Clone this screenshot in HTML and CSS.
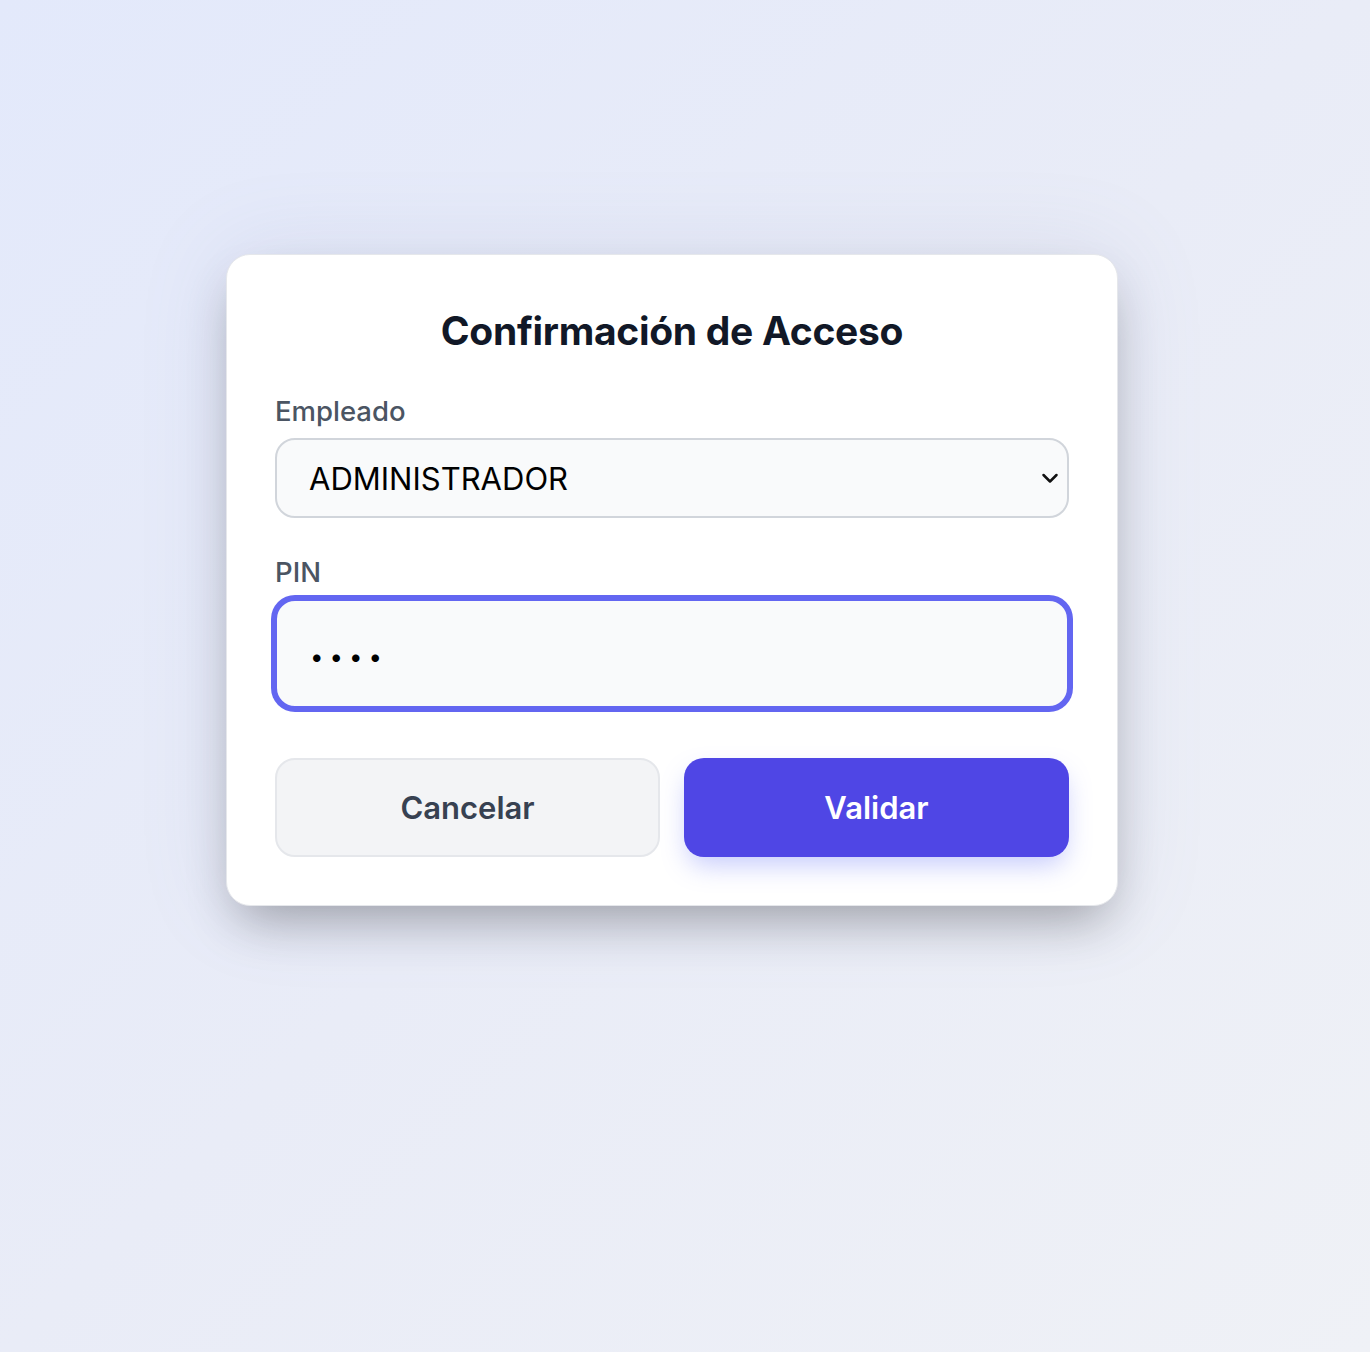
FILE: index.html
```html
<!DOCTYPE html>
<html lang="es">
<head>
<meta charset="utf-8">
<title>Confirmación de Acceso</title>
<link rel="stylesheet" href="styles.css">
</head>
<body>
<main class="page">
  <section class="card">
    <h1 class="title">Confirmación de Acceso</h1>
    <div class="field">
      <label class="label" for="empleado">Empleado</label>
      <div class="select-wrap">
        <select id="empleado" class="select">
          <option>ADMINISTRADOR</option>
        </select>
        <svg class="chevron" width="18" height="11" viewBox="0 0 18 11" aria-hidden="true">
          <path d="M2.5 2 L9 8.5 L15.5 2" fill="none" stroke="#111" stroke-width="2.5" stroke-linecap="round" stroke-linejoin="round"/>
        </svg>
      </div>
    </div>
    <div class="field">
      <label class="label" for="pin">PIN</label>
      <input id="pin" class="input" type="password" value="1234">
    </div>
    <div class="actions">
      <button class="btn btn-cancel" type="button">Cancelar</button>
      <button class="btn btn-primary" type="button">Validar</button>
    </div>
  </section>
</main>
</body>
</html>
```

FILE: styles.css
```css
* { box-sizing: border-box; }

html, body {
  margin: 0;
  padding: 0;
}

body {
  font-family: Inter, "Noto Sans", "Liberation Sans", sans-serif;
  background: linear-gradient(135deg, #e3e9fb 0%, #e9ecf7 50%, #eff1f6 100%);
  min-height: 1352px;
}

.page {
  display: flex;
  justify-content: center;
  padding-top: 254px;
  padding-right: 26px;
}

.card {
  width: 892px;
  background: #ffffff;
  border: 1px solid #e5e7eb;
  border-radius: 24px;
  padding: 48px;
  box-shadow: 0 25px 50px -12px rgba(0, 0, 0, 0.3), 0 0 90px rgba(120, 130, 170, 0.14);
}

.title {
  margin: 4px 0 38px;
  font-size: 39px;
  line-height: 48px;
  font-weight: 700;
  color: #111827;
  text-align: center;
  letter-spacing: -0.3px;
}

.field {
  display: flex;
  flex-direction: column;
}

.field + .field {
  margin-top: 36px;
}

.label {
  font-size: 27.5px;
  line-height: 36px;
  font-weight: 500;
  color: #4b5563;
  margin-bottom: 9px;
}

.select-wrap {
  position: relative;
}

.select {
  appearance: none;
  -webkit-appearance: none;
  width: 100%;
  height: 80px;
  padding: 0 60px 0 32px;
  border: 2px solid #d1d5db;
  border-radius: 20px;
  background: #f9fafb;
  font-family: Inter, "Noto Sans", "Liberation Sans", sans-serif;
  font-size: 31px;
  color: #000;
  outline: none;
}

.chevron {
  position: absolute;
  right: 10px;
  top: 35px;
  pointer-events: none;
}

.input {
  width: 100%;
  height: 109px;
  padding: 5px 30px 0 33px;
  border: 2px solid #6366f1;
  border-radius: 20px;
  background: #f9fafb;
  box-shadow: 0 0 0 4px #6366f1;
  font-family: Inter, "Noto Sans", "Liberation Sans", sans-serif;
  font-size: 24px;
  letter-spacing: 6px;
  color: #000;
  outline: none;
}

.actions {
  display: grid;
  grid-template-columns: 1fr 1fr;
  gap: 24px;
  margin-top: 50px;
}

.btn {
  height: 99px;
  border-radius: 20px;
  font-family: Inter, "Noto Sans", "Liberation Sans", sans-serif;
  font-size: 31px;
  font-weight: 600;
  cursor: pointer;
}

.btn-cancel {
  background: #f3f4f6;
  border: 2px solid #e5e7eb;
  color: #374151;
}

.btn-primary {
  background: #4f46e5;
  border: none;
  color: #ffffff;
  box-shadow: 0 12px 26px -4px rgba(129, 140, 248, 0.45);
}
```
